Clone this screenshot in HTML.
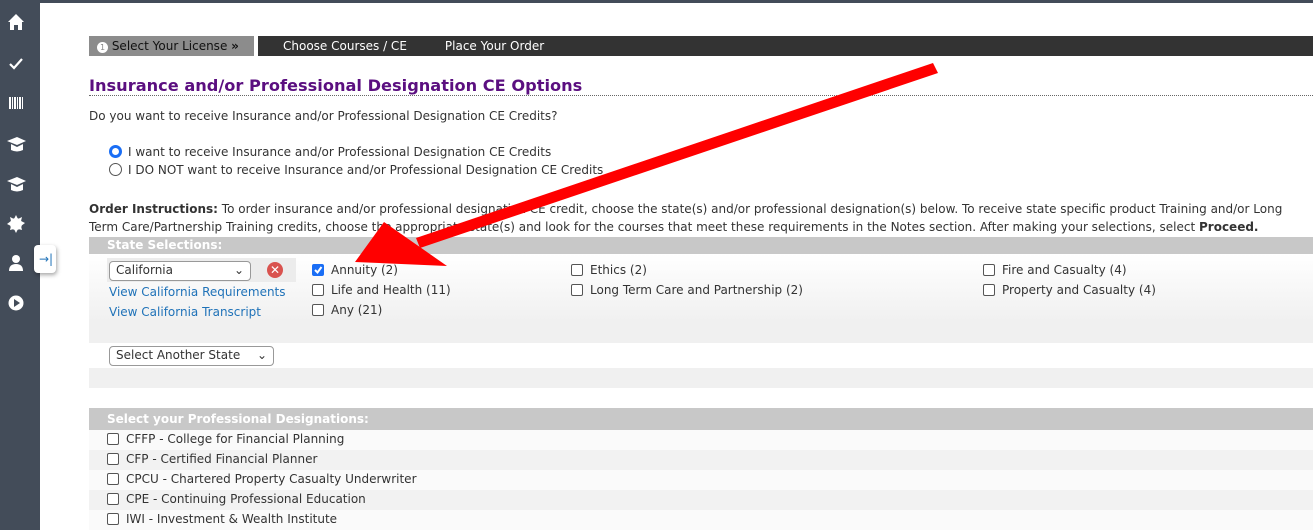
<!DOCTYPE html>
<html><head><meta charset="utf-8"><style>
*{margin:0;padding:0;box-sizing:border-box}
body{width:1313px;height:530px;overflow:hidden;background:#fff;font-family:"DejaVu Sans","Liberation Sans",sans-serif;font-size:12px;color:#333;position:relative}
.a{position:absolute;white-space:nowrap}
#side{left:0;top:0;width:40px;height:530px;background:#434c59}
#top{left:40px;top:0;width:1273px;height:3px;background:#434c59}
.bar{background:#c8c8c8;color:#fff;font-weight:bold;padding-left:18px;line-height:17px;font-size:12px}
.cb{display:inline-block;width:12px;height:12px;border:1px solid #555;border-radius:2px;background:#fff;vertical-align:-2px;margin-right:7px}
.cb.on{background:#1a6ef5;border-color:#1a6ef5;position:relative}
a{color:#1f72b8;text-decoration:none}
.sel{border:1px solid #999;border-radius:4px;background:#fff;height:20px;font-size:12px;padding:1px 6px;color:#333}
</style></head><body>
<div class="a" id="side"></div><div class="a" id="top"></div>
<svg class="a" style="left:0;top:0" width="40" height="320" fill="#fff">
<path d="M8 22 L16 14 L24 22 L22 22 L22 30 L18 30 L18 25 L14 25 L14 30 L10 30 L10 22Z"/>
<path d="M10 64 L14 68 L22 59" stroke="#fff" stroke-width="2.2" fill="none"/>
<rect x="9" y="97" width="2" height="12"/><rect x="12" y="97" width="1" height="12"/><rect x="14" y="97" width="2" height="12"/><rect x="17" y="97" width="1" height="12"/><rect x="19" y="97" width="2" height="12"/><rect x="22" y="97" width="1" height="12"/>
<path d="M7 141 L17 137 L26 141 L17 145Z M11 144 L11 150 Q17 153 23 150 L23 144 L17 147Z"/>
<path d="M7 181 L17 177 L26 181 L17 185Z M11 184 L11 190 Q17 193 23 190 L23 184 L17 187Z"/>
<circle cx="16" cy="224" r="6"/><path d="M16 215 L18 219 L22 217 L21 221 L25 223 L21 226 L22 230 L18 229 L16 233 L14 229 L10 230 L11 226 L7 224 L11 221 L10 217 L14 219Z"/>
<circle cx="16" cy="259" r="4"/><path d="M9 271 Q9 264 16 264 Q23 264 23 271Z"/>
<circle cx="16" cy="303" r="7.5"/><path d="M14 299 L20 303 L14 307Z" fill="#434c59"/>
</svg>
<div class="a" style="left:34px;top:245px;width:22px;height:28px;background:#fff;border-radius:4px;box-shadow:1px 2px 4px rgba(0,0,0,.35)"></div>
<div class="a" style="left:39px;top:252px;color:#1f72b8;font-size:12px">→|</div>

<div class="a" style="left:89px;top:36px;width:165px;height:20px;background:#8c8c8c;color:#111;font-size:12px;line-height:20px;padding-left:8px"><span style="display:inline-block;width:11px;height:11px;border-radius:50%;background:#fff;color:#888;font-size:8px;line-height:11px;text-align:center;vertical-align:0">1</span> Select Your License <b>»</b></div>
<div class="a" style="left:258px;top:36px;width:1055px;height:20px;background:#333;color:#fff;font-size:12px;line-height:20px;padding-left:25px">Choose Courses / CE<span style="margin-left:38px">Place Your Order</span></div>

<div class="a" style="left:89px;top:76px;font-size:16.2px;font-weight:bold;color:#5b0f80">Insurance and/or Professional Designation CE Options</div>
<div class="a" style="left:89px;top:95px;width:1224px;border-top:1px dotted #666"></div>
<div class="a" style="left:89px;top:109px">Do you want to receive Insurance and/or Professional Designation CE Credits?</div>
<div class="a" style="left:109px;top:145px"><span style="display:inline-block;width:13px;height:13px;border-radius:50%;border:3.5px solid #1a6ef5;vertical-align:-2px;margin-right:6px"></span>I want to receive Insurance and/or Professional Designation CE Credits</div>
<div class="a" style="left:109px;top:163px"><span style="display:inline-block;width:13px;height:13px;border-radius:50%;border:1px solid #555;vertical-align:-2px;margin-right:6px"></span>I DO NOT want to receive Insurance and/or Professional Designation CE Credits</div>
<div class="a" style="left:89px;top:200px;line-height:18px;white-space:normal;width:1220px"><b>Order Instructions:</b> To order insurance and/or professional designation CE credit, choose the state(s) and/or professional designation(s) below. To receive state specific product Training and/or Long Term Care/Partnership Training credits, choose the appropriate state(s) and look for the courses that meet these requirements in the Notes section. After making your selections, select <b>Proceed.</b></div>

<div class="a bar" style="left:89px;top:237px;width:1224px">State Selections:</div>
<div class="a" style="left:89px;top:254px;width:1224px;height:68px;background:linear-gradient(#fff,#f0f0f0)"></div>
<div class="a" style="left:89px;top:322px;width:1224px;height:21px;background:#f0f0f0"></div>
<div class="a" style="left:89px;top:368px;width:1224px;height:20px;background:#f0f0f0"></div>
<div class="a" style="left:107px;top:258px;width:189px;height:24px;background:#ececec"></div>
<div class="a sel" style="left:109px;top:261px;width:142px">California<span style="float:right">⌄</span></div>
<div class="a" style="left:267px;top:262px;width:16px;height:16px;border-radius:50%;background:#d9534f;color:#fff;font-size:12px;line-height:16px;text-align:center;font-weight:bold">✕</div>
<a class="a" style="left:109px;top:285px;font-size:12px">View California Requirements</a>
<a class="a" style="left:109px;top:305px;font-size:12px">View California Transcript</a>
<div class="a sel" style="left:109px;top:346px;width:165px">Select Another State<span style="float:right">⌄</span></div>

<div class="a" style="left:312px;top:263px"><span class="cb on"><svg width="12" height="12" style="position:absolute;left:-1px;top:-1px"><path d="M3 6 L5.5 8.5 L9.5 3" stroke="#fff" stroke-width="2" fill="none"/></svg></span>Annuity (2)</div>
<div class="a" style="left:312px;top:283px"><span class="cb"></span>Life and Health (11)</div>
<div class="a" style="left:312px;top:303px"><span class="cb"></span>Any (21)</div>
<div class="a" style="left:571px;top:263px"><span class="cb"></span>Ethics (2)</div>
<div class="a" style="left:571px;top:283px"><span class="cb"></span>Long Term Care and Partnership (2)</div>
<div class="a" style="left:983px;top:263px"><span class="cb"></span>Fire and Casualty (4)</div>
<div class="a" style="left:983px;top:283px"><span class="cb"></span>Property and Casualty (4)</div>

<div class="a bar" style="left:89px;top:408px;width:1224px;line-height:22px">Select your Professional Designations:</div>
<div class="a" style="left:89px;top:430px;width:1224px;height:20px;background:#fafafa"></div>
<div class="a" style="left:89px;top:450px;width:1224px;height:20px;background:#f2f2f2"></div>
<div class="a" style="left:89px;top:470px;width:1224px;height:20px;background:#fafafa"></div>
<div class="a" style="left:89px;top:490px;width:1224px;height:20px;background:#f2f2f2"></div>
<div class="a" style="left:89px;top:510px;width:1224px;height:20px;background:#fafafa"></div>
<div class="a" style="left:107px;top:432px"><span class="cb"></span>CFFP - College for Financial Planning</div>
<div class="a" style="left:107px;top:452px"><span class="cb"></span>CFP - Certified Financial Planner</div>
<div class="a" style="left:107px;top:472px"><span class="cb"></span>CPCU - Chartered Property Casualty Underwriter</div>
<div class="a" style="left:107px;top:492px"><span class="cb"></span>CPE - Continuing Professional Education</div>
<div class="a" style="left:107px;top:512px"><span class="cb"></span>IWI - Investment &amp; Wealth Institute</div>

<svg class="a" style="left:0;top:0" width="1313" height="530">
<path d="M933 63 L938 73 L420 248 L416 238Z" fill="#f00"/>
<polygon points="355,262 384,222 447,266" fill="#f00"/>
</svg>
</body></html>
